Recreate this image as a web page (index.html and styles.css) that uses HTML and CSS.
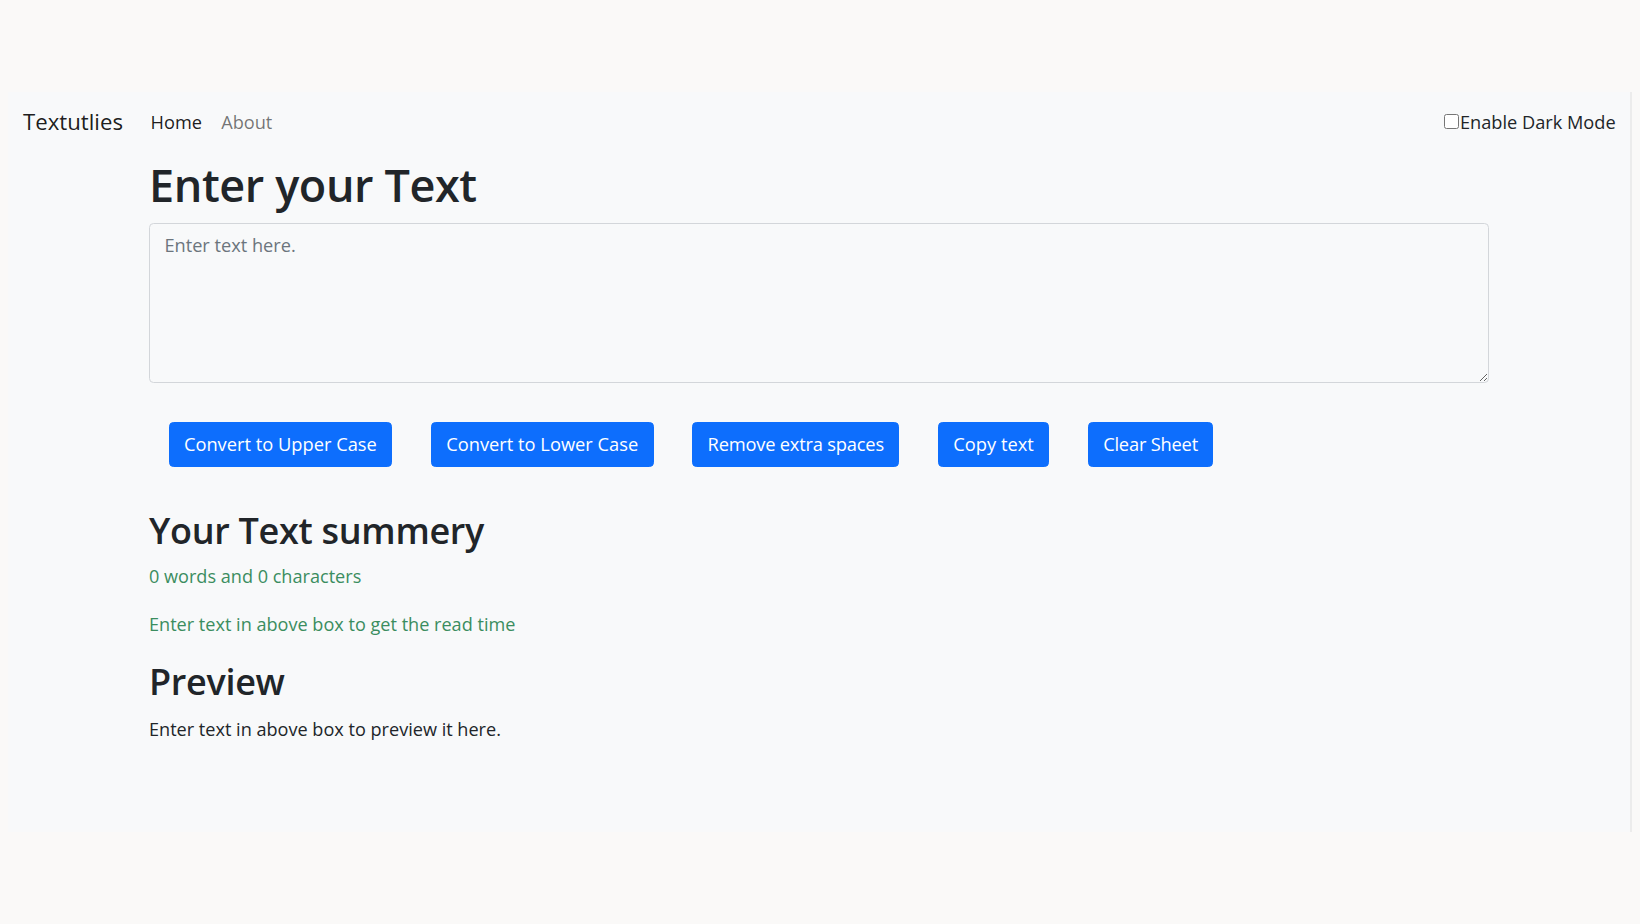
FILE: index.html
```html
<!DOCTYPE html>
<html lang="en">
<head>
<meta charset="utf-8">
<title>Textutlies - Home</title>
<link rel="stylesheet" href="styles.css">
</head>
<body>
<div class="frame">
  <nav class="navbar">
    <div class="nav-left">
      <a class="brand" href="#">Textutlies</a>
      <ul class="nav-list">
        <li><a class="nav-link active" href="#">Home</a></li>
        <li><a class="nav-link" href="#">About</a></li>
      </ul>
    </div>
    <label class="dark-toggle"><input type="checkbox" class="dark-check">Enable Dark Mode</label>
  </nav>

  <main class="container">
    <section class="editor">
      <h1 class="title">Enter your Text</h1>
      <textarea class="text-input" placeholder="Enter text here."></textarea>
      <div class="btn-row">
        <button class="btn">Convert to Upper Case</button>
        <button class="btn">Convert to Lower Case</button>
        <button class="btn btn-tight">Remove extra spaces</button>
        <button class="btn">Copy text</button>
        <button class="btn btn-tight">Clear Sheet</button>
      </div>
    </section>

    <section class="summary">
      <h2 class="subtitle summary-title">Your Text summery</h2>
      <p class="stat">0 words and 0 characters</p>
      <p class="stat">Enter text in above box to get the read time</p>
      <h2 class="subtitle preview-title">Preview</h2>
      <p class="preview">Enter text in above box to preview it here.</p>
    </section>
  </main>
</div>
</body>
</html>
```
FILE: styles.css
```css
* {
  box-sizing: border-box;
}

html, body {
  margin: 0;
  padding: 0;
}

body {
  background: #faf9f8;
  font-family: "Open Sans", "Noto Sans", "Liberation Sans", sans-serif;
  color: #212529;
  padding-top: 92px;
  padding-left: 8px;
}

.frame {
  width: 1624px;
  height: 740px;
  background: #f8f9fa;
  border-right: 2px solid #ececec;
}

/* Navbar */
.navbar {
  display: flex;
  align-items: center;
  justify-content: space-between;
  padding: 6px 14.4px 8px 15px;
}

.nav-left {
  display: flex;
  align-items: center;
}

.brand {
  font-size: 22.2px;
  line-height: 36px;
  padding: 3.75px 0;
  margin-right: 18px;
  color: rgba(0, 0, 0, 0.9);
  text-decoration: none;
}

.nav-list {
  display: flex;
  list-style: none;
  margin: 0;
  padding: 0;
}

.nav-link {
  display: block;
  font-size: 18.2px;
  line-height: 28.8px;
  padding: 9.6px 9.6px;
  color: rgba(0, 0, 0, 0.55);
  text-decoration: none;
}

.nav-link.active {
  color: rgba(0, 0, 0, 0.9);
}

.dark-toggle {
  display: flex;
  align-items: center;
  font-size: 18.2px;
  line-height: 28.8px;
  color: #212529;
}

.dark-check {
  width: 15px;
  height: 15px;
  margin: 0 1px 0 0;
}

/* Main */
.container {
  width: 1340px;
  margin-left: 141px;
}

.title {
  font-size: 45px;
  font-weight: 600;
  letter-spacing: -0.4px;
  line-height: 57.6px;
  margin: 2px 0 9px;
  color: #212529;
}

.text-input {
  display: block;
  width: 1340px;
  height: 160px;
  margin: 0 0 19.2px;
  padding: 7.2px 14.4px;
  border: 1px solid #d3d6da;
  border-radius: 4.5px;
  background: #f8f9fa;
  font-family: inherit;
  font-size: 18.2px;
  line-height: 28.8px;
  color: #212529;
  resize: vertical;
}

.text-input::placeholder {
  color: #6c757d;
}

.btn-row {
  display: flex;
  gap: 38.6px;
  padding: 20px 19.2px 19.2px 19.5px;
}

.btn {
  font-family: inherit;
  font-size: 18.3px;
  line-height: 28.8px;
  padding: 7.2px 14.4px;
  border: 1px solid #0d6efd;
  border-radius: 4.5px;
  background: #0d6efd;
  color: #ffffff;
  cursor: pointer;
}

.btn-tight {
  letter-spacing: -0.2px;
}

.summary {
  margin-top: 21.5px;
}

.subtitle {
  font-size: 36px;
  font-weight: 600;
  letter-spacing: -0.3px;
  line-height: 46px;
  color: #212529;
}

.summary-title {
  margin: 0 0 8px;
}

.preview-title {
  margin: 0 0 10px;
}

.stat,
.preview {
  font-size: 18.1px;
  line-height: 28.8px;
  margin: 0 0 20px;
}

.stat {
  color: #3b8d5f;
}

.preview {
  color: #212529;
}
```
